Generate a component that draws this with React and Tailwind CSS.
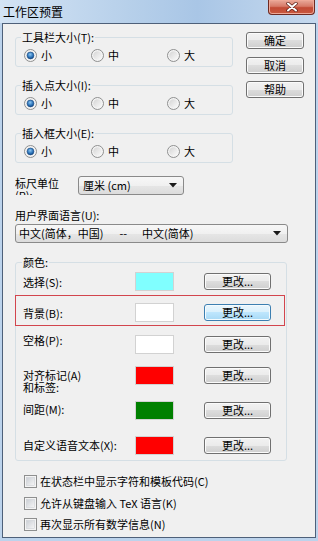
import React from "react";

// 单选按钮（Win7 风格）
const Radio = ({checked, label, className}) => (
	<div className={`flex items-center gap-[4px] ${className}`}>
		<svg width="13" height="13" viewBox="0 0 13 13">
			<defs>
				<linearGradient id="rOff" x1="0" y1="0" x2="1" y2="1">
					<stop offset="0" stopColor="#d5d5d5" />
					<stop offset="1" stopColor="#fafafa" />
				</linearGradient>
				<radialGradient id="rOn" cx="0.45" cy="0.35" r="0.7">
					<stop offset="0" stopColor="#8cc7f2" />
					<stop offset="0.6" stopColor="#2b72b8" />
					<stop offset="1" stopColor="#0c3d74" />
				</radialGradient>
			</defs>
			<circle cx="6.5" cy="6.5" r="6" fill="#f4f4f4" stroke="#8e8f8f" />
			<circle cx="6.5" cy="6.5" r="4.3" fill="url(#rOff)" />
			{checked && <circle cx="6.5" cy="6.5" r="3.4" fill="url(#rOn)" stroke="#1b4e86" strokeWidth="0.6" />}
		</svg>
		<span>{label}</span>
	</div>
);

// 复选框
const Check = ({label, className}) => (
	<div className={`flex h-[14px] items-center gap-[3px] ${className}`}>
		<svg width="13" height="13" viewBox="0 0 13 13">
			<defs>
				<linearGradient id="cOff" x1="0" y1="0" x2="1" y2="1">
					<stop offset="0" stopColor="#cbcfd5" />
					<stop offset="1" stopColor="#f6f6f6" />
				</linearGradient>
			</defs>
			<rect x="0.5" y="0.5" width="12" height="12" fill="#f4f4f4" stroke="#8e8f8f" />
			<rect x="2.5" y="2.5" width="8" height="8" fill="url(#cOff)" stroke="#c8ccd2" strokeWidth="0.5" />
		</svg>
		<span>{label}</span>
	</div>
);

const Btn = ({children, focused, className}) => (
	<div
		className={`flex h-[17px] items-center justify-center rounded-[3px] border leading-none ${
			focused
				? "border-[#3c7fb1] bg-[linear-gradient(#eaf6fd_0%,#d9f0fc_50%,#bee6fd_50%,#a7d9f5_100%)] shadow-[inset_0_0_0_1px_#f4fbfe]"
				: "border-[#707070] bg-[linear-gradient(#f2f2f2_0%,#ebebeb_50%,#dddddd_50%,#cfcfcf_100%)] shadow-[inset_0_0_0_1px_#fbfbfb]"
		} ${className}`}
	>
		{children}
	</div>
);

const Arrow = () => (
	<svg width="8" height="5" viewBox="0 0 8 5">
		<path d="M0 0 H8 L4 4.5 Z" fill="#1a1a1a" />
	</svg>
);

const Group = ({title, className}) => (
	<fieldset className={`rounded-[3px] border border-[#d5dfe5] pb-[4px] pl-[8px] ${className}`}>
		<legend className="ml-[-3px] px-[1px] leading-[16px]">{title}</legend>
		<div className="mt-[3px] flex h-[14px] items-center">
			<Radio checked label="小" className="w-[67px]" />
			<Radio label="中" className="w-[76px]" />
			<Radio label="大" />
		</div>
	</fieldset>
);

const Swatch = ({color}) => (
	<div className={`h-[19px] w-[39px] shrink-0 border border-[#d2d2d2] ${color}`} />
);

const ColorRow = ({label, color, focused, className, labelClass}) => (
	<div className={`flex ${className}`}>
		<div className={`w-[112px] shrink-0 leading-[12px] ${labelClass}`}>{label}</div>
		<Swatch color={color} />
		<Btn focused={focused} className="ml-[30px] w-[67px] self-center">更改...</Btn>
	</div>
);

const App = () => {
	return (
		<div className="flex h-[541px] w-[318px] flex-col bg-[#bcd3ec] font-['Noto_Sans_CJK_SC',sans-serif] text-[11px] text-black">
			{/* 标题栏 */}
			<div className="flex h-[23px] items-start bg-[linear-gradient(90deg,#d3e3f4_0%,#b7d0ea_40%,#a9c6e6_62%,#c6d9ee_100%)]">
				<div className="ml-[3px] mt-[4px] text-[12px] leading-[16px]">工作区预置</div>
				<div className="ml-auto mr-[3px] flex h-[15px] w-[47px] items-center justify-center rounded-b-[4px] border border-t-0 border-[#6e2a22] bg-[linear-gradient(#e9a99a_0%,#d77a68_45%,#c24a35_55%,#c9593f_100%)] shadow-[inset_0_0_0_1px_#eea897]">
					<svg width="12" height="10" viewBox="0 0 12 10">
						<path d="M2 1.5 L10 8.5 M10 1.5 L2 8.5" stroke="#5a1d15" strokeWidth="3.4" strokeLinecap="round" />
						<path d="M2 1.5 L10 8.5 M10 1.5 L2 8.5" stroke="#ffffff" strokeWidth="2" strokeLinecap="round" />
					</svg>
				</div>
			</div>

			{/* 客户区 */}
			<div className="mx-[2px] h-[515px] w-[314px] border border-[#4e6079] bg-[#f0f0f0]">
				<div className="flex pl-[12px] pt-[5px]">
					<div className="flex w-[218px] flex-col">
						<Group title="工具栏大小(T):" />
						<Group title="插入点大小(I):" className="mt-[10px]" />
						<Group title="插入框大小(E):" className="mt-[10px]" />
					</div>
					<div className="ml-[13px] flex w-[58px] flex-col pt-[3px]">
						<Btn>确定</Btn>
						<Btn className="mt-[8px]">取消</Btn>
						<Btn className="mt-[7px]">帮助</Btn>
					</div>
				</div>

				<div className="mt-[13px] flex items-start pl-[12px]">
					<div className="mr-[13px] h-[19px] w-[50px] overflow-hidden pt-[1px] leading-[12px]">标尺单位(R):</div>
					<div className="flex h-[19px] w-[106px] items-center justify-between rounded-[3px] border border-[#8a8a8a] bg-[linear-gradient(#f7f7f7_0%,#f0f0f0_50%,#e6e6e6_50%,#dcdcdc_100%)] pl-[4px] pr-[6px]">
						<span>厘米 (cm)</span>
						<Arrow />
					</div>
				</div>

				<div className="mt-[13px] pl-[12px] leading-[14px]">用户界面语言(U):</div>
				<div className="ml-[12px] mt-[2px] flex h-[19px] w-[273px] items-center rounded-[3px] border border-[#8a8a8a] bg-[linear-gradient(#f7f7f7_0%,#f0f0f0_50%,#e6e6e6_50%,#dcdcdc_100%)] pl-[3px] pr-[6px]">
					<span>中文(简体，中国)</span>
					<span className="ml-[16px]">--</span>
					<span className="ml-[15px]">中文(简体)</span>
					<span className="ml-auto">
						<Arrow />
					</span>
				</div>

				{/* 颜色 */}
				<fieldset className="ml-[12px] mt-[11px] w-[272px] rounded-[3px] border border-[#d5dfe5] pb-[5px] pl-[7px]">
					<legend className="ml-[-1px] px-[1px] leading-[16px]">颜色:</legend>
					<ColorRow label="选择(S):" color="bg-[#80ffff]" className="mt-[2px] items-center" />
					<div className="ml-[-8px] mt-[4px] w-[270px] border border-[#d2454d] pb-[3px] pl-[7px] pt-[7px]">
						<ColorRow label="背景(B):" color="bg-white" focused className="items-center" />
					</div>
					<ColorRow label="空格(P):" color="bg-white" className="mt-[9px] items-start" labelClass="-mt-[1px]" />
					<ColorRow
						label={<>对齐标记(A)<br />和标签:</>}
						color="bg-[#ff0000]"
						className="mt-[12px] items-start"
						labelClass="mt-[3px] -mb-[8px]"
					/>
					<ColorRow label="间距(M):" color="bg-[#008000]" className="mt-[16px] items-start" labelClass="mt-[2px]" />
					<ColorRow label="自定义语音文本(X):" color="bg-[#ff0000]" className="mt-[16px] items-start" labelClass="mt-[3px]" />
				</fieldset>

				<div className="pl-[21px]">
					<Check label="在状态栏中显示字符和模板代码(C)" className="mt-[13px]" />
					<Check label="允许从键盘输入 TeX 语言(K)" className="mt-[8px]" />
					<Check label="再次显示所有数学信息(N)" className="mt-[7px]" />
				</div>
			</div>
		</div>
	);
};

export default App;
